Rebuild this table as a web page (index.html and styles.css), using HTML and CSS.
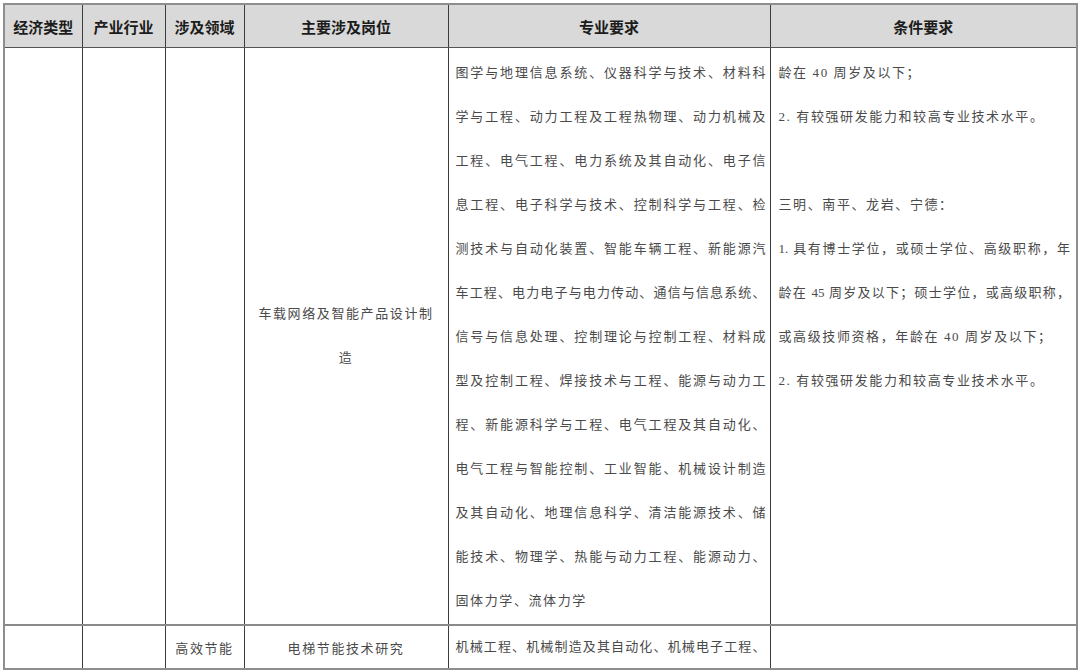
FILE: index.html
```html
<!DOCTYPE html>
<html lang="zh-CN">
<head>
<meta charset="utf-8">
<title>岗位表</title>
<link rel="stylesheet" href="styles.css">
</head>
<body>
<div class="page">
<table class="grid">
  <colgroup>
    <col class="c1"><col class="c2"><col class="c3"><col class="c4"><col class="c5"><col class="c6">
  </colgroup>
  <thead>
    <tr class="head">
      <th>经济类型</th>
      <th>产业行业</th>
      <th>涉及领域</th>
      <th>主要涉及岗位</th>
      <th>专业要求</th>
      <th>条件要求</th>
    </tr>
  </thead>
  <tbody>
    <tr class="big">
      <td></td>
      <td></td>
      <td></td>
      <td class="mid">
        <div class="ln">车载网络及智能产品设计制</div>
        <div class="ln">造</div>
      </td>
      <td class="top major">
        <div class="ln full">图学与地理信息系统、仪器科学与技术、材料科</div>
        <div class="ln full">学与工程、动力工程及工程热物理、动力机械及</div>
        <div class="ln full">工程、电气工程、电力系统及其自动化、电子信</div>
        <div class="ln full">息工程、电子科学与技术、控制科学与工程、检</div>
        <div class="ln full">测技术与自动化装置、智能车辆工程、新能源汽</div>
        <div class="ln full">车工程、电力电子与电力传动、通信与信息系统、</div>
        <div class="ln full">信号与信息处理、控制理论与控制工程、材料成</div>
        <div class="ln full">型及控制工程、焊接技术与工程、能源与动力工</div>
        <div class="ln full">程、新能源科学与工程、电气工程及其自动化、</div>
        <div class="ln full">电气工程与智能控制、工业智能、机械设计制造</div>
        <div class="ln full">及其自动化、地理信息科学、清洁能源技术、储</div>
        <div class="ln full">能技术、物理学、热能与动力工程、能源动力、</div>
        <div class="ln">固体力学、流体力学</div>
      </td>
      <td class="top cond">
        <div class="ln">龄在 40 周岁及以下；</div>
        <div class="ln">2. 有较强研发能力和较高专业技术水平。</div>
        <div class="ln"></div>
        <div class="ln">三明、南平、龙岩、宁德：</div>
        <div class="ln full">1. 具有博士学位，或硕士学位、高级职称，年</div>
        <div class="ln full">龄在 45 周岁及以下；硕士学位，或高级职称，</div>
        <div class="ln">或高级技师资格，年龄在 40 周岁及以下；</div>
        <div class="ln">2. 有较强研发能力和较高专业技术水平。</div>
      </td>
    </tr>
    <tr class="small">
      <td></td>
      <td></td>
      <td class="ctr">高效节能</td>
      <td class="ctr">电梯节能技术研究</td>
      <td class="major"><div class="ln full">机械工程、机械制造及其自动化、机械电子工程、</div></td>
      <td></td>
    </tr>
  </tbody>
</table>
</div>
</body>
</html>
```
FILE: styles.css
```css
html, body {
  margin: 0;
  padding: 0;
  background: #ffffff;
}
.page {
  padding: 3px 0 0 3px;
  width: 1074px;
}
.grid {
  border-collapse: collapse;
  table-layout: fixed;
  width: 1073px;
  border: 2px solid #8e8e8e;
}
.c1 { width: 78px; }
.c2 { width: 83px; }
.c3 { width: 79px; }
.c4 { width: 204px; }
.c5 { width: 322px; }
.c6 { width: 307px; }

.grid th, .grid td {
  border: 1px solid #3c3c3c;
  padding: 0;
}
.head th {
  height: 42px;
  background: #d9d9d9;
  font-family: "Noto Sans CJK SC", sans-serif;
  font-weight: 700;
  font-size: 15px;
  color: #1c1c1c;
  text-align: center;
  vertical-align: middle;
  border-bottom: 1px solid #555;
}
.grid td {
  font-family: "Liberation Serif", "Noto Sans CJK SC", serif;
  font-size: 13px;
  color: #4a4a4a;
}
.small td {
  height: 42px;
  border-top: 2px solid #8a8a8a;
}
.ln {
  height: 44px;
  line-height: 44px;
  white-space: nowrap;
  letter-spacing: 1.6px;
}
.ln.full {
  white-space: normal;
  letter-spacing: 0;
  text-align: justify;
  text-align-last: justify;
}
.mid {
  vertical-align: middle;
  text-align: center;
}
.top {
  vertical-align: top;
}
.big .top {
  padding-top: 3px;
  padding-bottom: 1px;
}
.major {
  padding-left: 7px !important;
  padding-right: 4px !important;
}
.cond {
  padding-left: 8px !important;
  padding-right: 6px !important;
}
.small .major .ln {
  height: 42px;
  line-height: 42px;
}
.ctr {
  text-align: center;
  vertical-align: middle;
  letter-spacing: 1.6px;
}
```
